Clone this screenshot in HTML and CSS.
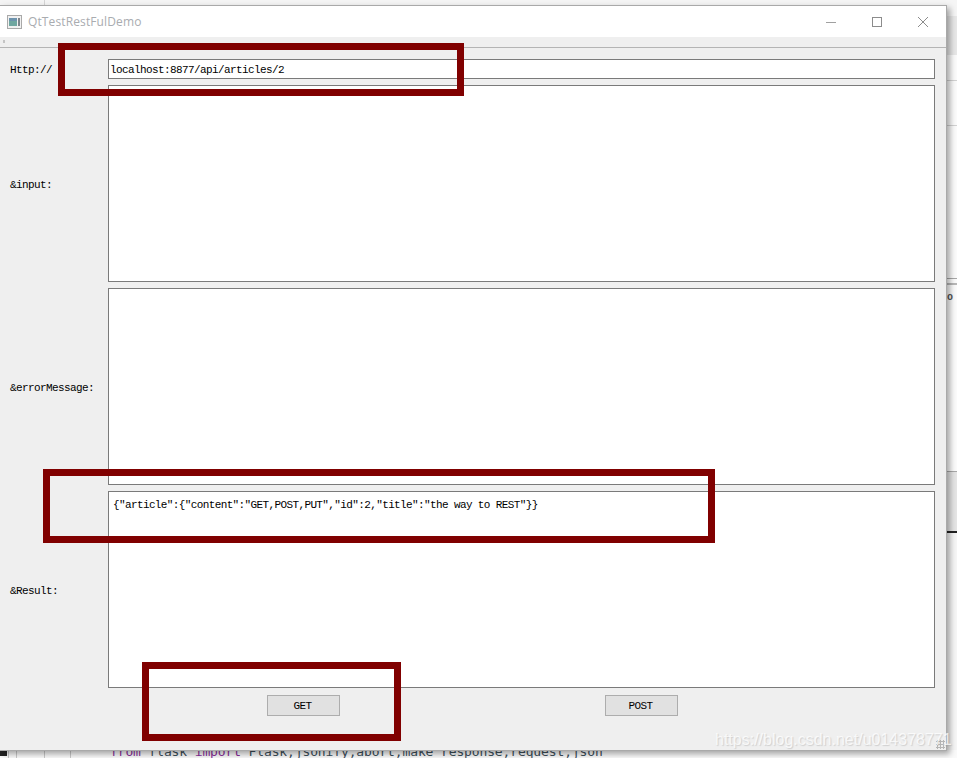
FILE: index.html
```html
<!DOCTYPE html>
<html lang="en">
<head>
<meta charset="utf-8">
<title>QtTestRestFulDemo</title>
<link rel="stylesheet" href="styles.css">
</head>
<body>
<div class="desktop">
  <div class="back-strip"><span class="tick"></span></div>
  <div class="back-code">
    <span class="gutter-mark"></span>
    <span class="gutter gutter-1"></span>
    <span class="gutter gutter-2"></span>
    <span class="gutter gutter-3"></span>
    <span class="gutter gutter-4"></span>
    <code class="code-line"><span class="kw">from</span> flask <span class="kw">import</span> Flask,jsonify,abort,make_response,request,json</code>
  </div>
  <div class="back-side">
    <div class="side side-top"></div>
    <div class="side side-bar"></div>
    <div class="side side-row1"></div>
    <div class="side side-row2"></div>
    <div class="side side-row3"></div>
    <div class="side side-band"></div>
    <div class="side side-text"><span class="side-o">o</span></div>
    <div class="side side-grey"></div>
    <div class="side side-black"></div>
  </div>

  <main class="window">
    <header class="titlebar">
      <svg class="app-icon" width="15" height="14" viewBox="0 0 15 14">
        <rect x="0.5" y="0.5" width="14" height="13" fill="#f1f1f1" stroke="#a9a9a9"/>
        <rect x="2" y="3" width="8" height="8" fill="#6fa7a0"/>
        <rect x="2" y="3" width="8" height="3" fill="#6d93ad"/>
        <rect x="11" y="3" width="2" height="8" fill="#7d858b"/>
      </svg>
      <span class="title">QtTestRestFulDemo</span>
      <div class="controls">
        <svg class="ctl" width="46" height="12" viewBox="0 0 46 12"><path d="M18 6.5H28" stroke="#a0a0a0"/></svg>
        <svg class="ctl" width="46" height="12" viewBox="0 0 46 12"><rect x="18.5" y="1.5" width="9" height="9" fill="none" stroke="#8c8c8c"/></svg>
        <svg class="ctl" width="46" height="12" viewBox="0 0 46 12"><path d="M18 1L28 11M28 1L18 11" stroke="#8c8c8c"/></svg>
      </div>
    </header>
    <div class="toolbar"><span class="grip"></span></div>
    <form class="form">
      <label class="lbl">Http://</label>
      <div class="line-edit">localhost:8877/api/articles/2</div>
      <label class="lbl">&amp;input:</label>
      <div class="text-edit"></div>
      <label class="lbl">&amp;errorMessage:</label>
      <div class="text-edit"></div>
      <label class="lbl">&amp;Result:</label>
      <div class="text-edit">{"article":{"content":"GET,POST,PUT","id":2,"title":"the way to REST"}}</div>
      <div class="buttons">
        <button type="button" class="btn">GET</button>
        <button type="button" class="btn">POST</button>
      </div>
    </form>
    <span class="size-grip"></span>
  </main>

  <div class="mark mark-url"></div>
  <div class="mark mark-result"></div>
  <div class="mark mark-get"></div>
  <div class="watermark">https://blog.csdn.net/u014378771</div>
</div>
</body>
</html>
```
FILE: styles.css
```css
* { box-sizing: border-box; }
html, body { margin: 0; padding: 0; }
body { width: 957px; height: 758px; overflow: hidden; background: #fff; }

.desktop { position: relative; width: 957px; height: 758px; overflow: hidden; background: #f6f6f6; }

.back-strip { position: absolute; left: 0; top: 0; width: 957px; height: 6px; background: #f4f4f4; }
.tick { position: absolute; left: 44px; top: 0; width: 1px; height: 5px; background: #d4d4d4; }

.back-code { position: absolute; left: 0; top: 750px; width: 957px; height: 8px; background: #fafafa; overflow: hidden; }
.gutter-mark { position: absolute; left: 0; top: 0; width: 7px; height: 6px; background: #222; }
.gutter { position: absolute; top: 0; width: 1px; height: 8px; background: #c9c9c9; }
.gutter-1 { left: 8px; }
.gutter-2 { left: 16px; }
.gutter-3 { left: 44px; }
.gutter-4 { left: 70px; }
.code-line { position: absolute; left: 110px; top: -7px; font: 13px/18px "DejaVu Sans Mono", monospace; letter-spacing: -0.13px; color: #3d4f5a; white-space: pre; }
.kw { color: #8a2f9b; }

.back-side { position: absolute; left: 946px; top: 0; width: 11px; height: 758px; display: flex; flex-direction: column; }
.side { flex: none; }
.side-top { height: 16px; background: #f5f5f5; }
.side-bar { height: 39px; background: #e7e7e7; }
.side-row1 { height: 26px; background: #fbfbfb; border-bottom: 1px solid #d2d2d2; }
.side-row2 { height: 45px; background: #fbfbfb; border-bottom: 1px solid #d2d2d2; }
.side-row3 { height: 152px; background: #fbfbfb; }
.side-band { height: 7px; background: #fbfbfb; border-top: 1px solid #a8a8a8; border-bottom: 2px solid #b8b8b8; }
.side-text { height: 186px; background: #fbfbfb; padding: 8px 0 0 1px; }
.side-o { display: block; font: bold 10px/10px "Liberation Mono", monospace; color: #555; }
.side-grey { height: 60px; background: #e5e5e5; border-top: 1px solid #a8a8a8; }
.side-black { height: 2px; background: #222; }

.window { position: absolute; left: 0; top: 5px; width: 947px; height: 746px; display: flex; flex-direction: column; background: #efefef; border: 1px solid #a9a9a9; border-left: 0; box-shadow: 3px 3px 6px rgba(0,0,0,.35); }

.titlebar { height: 31px; flex: none; display: flex; align-items: center; background: #fff; padding-left: 7px; }
.app-icon { flex: none; }
.title { margin-left: 6px; font: 12px/16px "Open Sans", "Liberation Sans", sans-serif; letter-spacing: .12px; color: #a9acb0; }
.controls { margin-left: auto; display: flex; }
.ctl { display: block; }

.toolbar { height: 11px; flex: none; background: #efefef; border-bottom: 1px solid #b4b4b4; position: relative; }
.grip { position: absolute; left: 3px; top: 3px; width: 2px; height: 3px; background: #c4c4c4; }

.form { flex: 1; display: grid; grid-template-columns: 98px 827px; grid-template-rows: 20px 197px 197px 197px 21px; row-gap: 6px; padding: 11px 0 0 10px; align-content: start; }

.lbl { align-self: center; padding-top: 2px; font: 11px/14px "Liberation Mono", monospace; letter-spacing: -0.6px; color: #000; }
.line-edit { background: #fff; border: 1px solid #7a7a7a; padding: 1px 2px 0 1px; font: 11px/18px "Liberation Mono", monospace; letter-spacing: -0.6px; color: #000; white-space: pre; }
.text-edit { background: #fff; border: 1px solid #7a7a7a; padding: 6px 4px; font: 11px/14px "Liberation Mono", monospace; letter-spacing: -0.62px; color: #000; white-space: pre; }

.buttons { grid-column: 2; display: flex; gap: 265px; height: 21px; margin-top: 1px; padding-left: 159px; }
.btn { width: 73px; height: 21px; padding: 2px 2px 0 0; background: #e1e1e1; border: 1px solid #adadad; border-radius: 0; font: 11px/17px "Liberation Mono", monospace; letter-spacing: -0.6px; color: #000; }

.size-grip { position: absolute; right: 1px; bottom: 1px; width: 9px; height: 9px; background-image: radial-gradient(circle at 50% 50%, #b5b5b5 1px, transparent 1.2px); background-size: 3px 3px; }

.mark { position: absolute; border: 7px solid #800000; pointer-events: none; }
.mark-url { left: 58px; top: 43px; width: 406px; height: 53px; }
.mark-result { left: 43px; top: 469px; width: 672px; height: 74px; }
.mark-get { left: 142px; top: 662px; width: 259px; height: 79px; }

.watermark { position: absolute; left: 715px; top: 729px; font: 16px/22px "Liberation Sans", sans-serif; color: rgba(255,255,255,.75); white-space: nowrap; text-shadow: 1px 1px 1px rgba(150,150,150,.35); }
```
